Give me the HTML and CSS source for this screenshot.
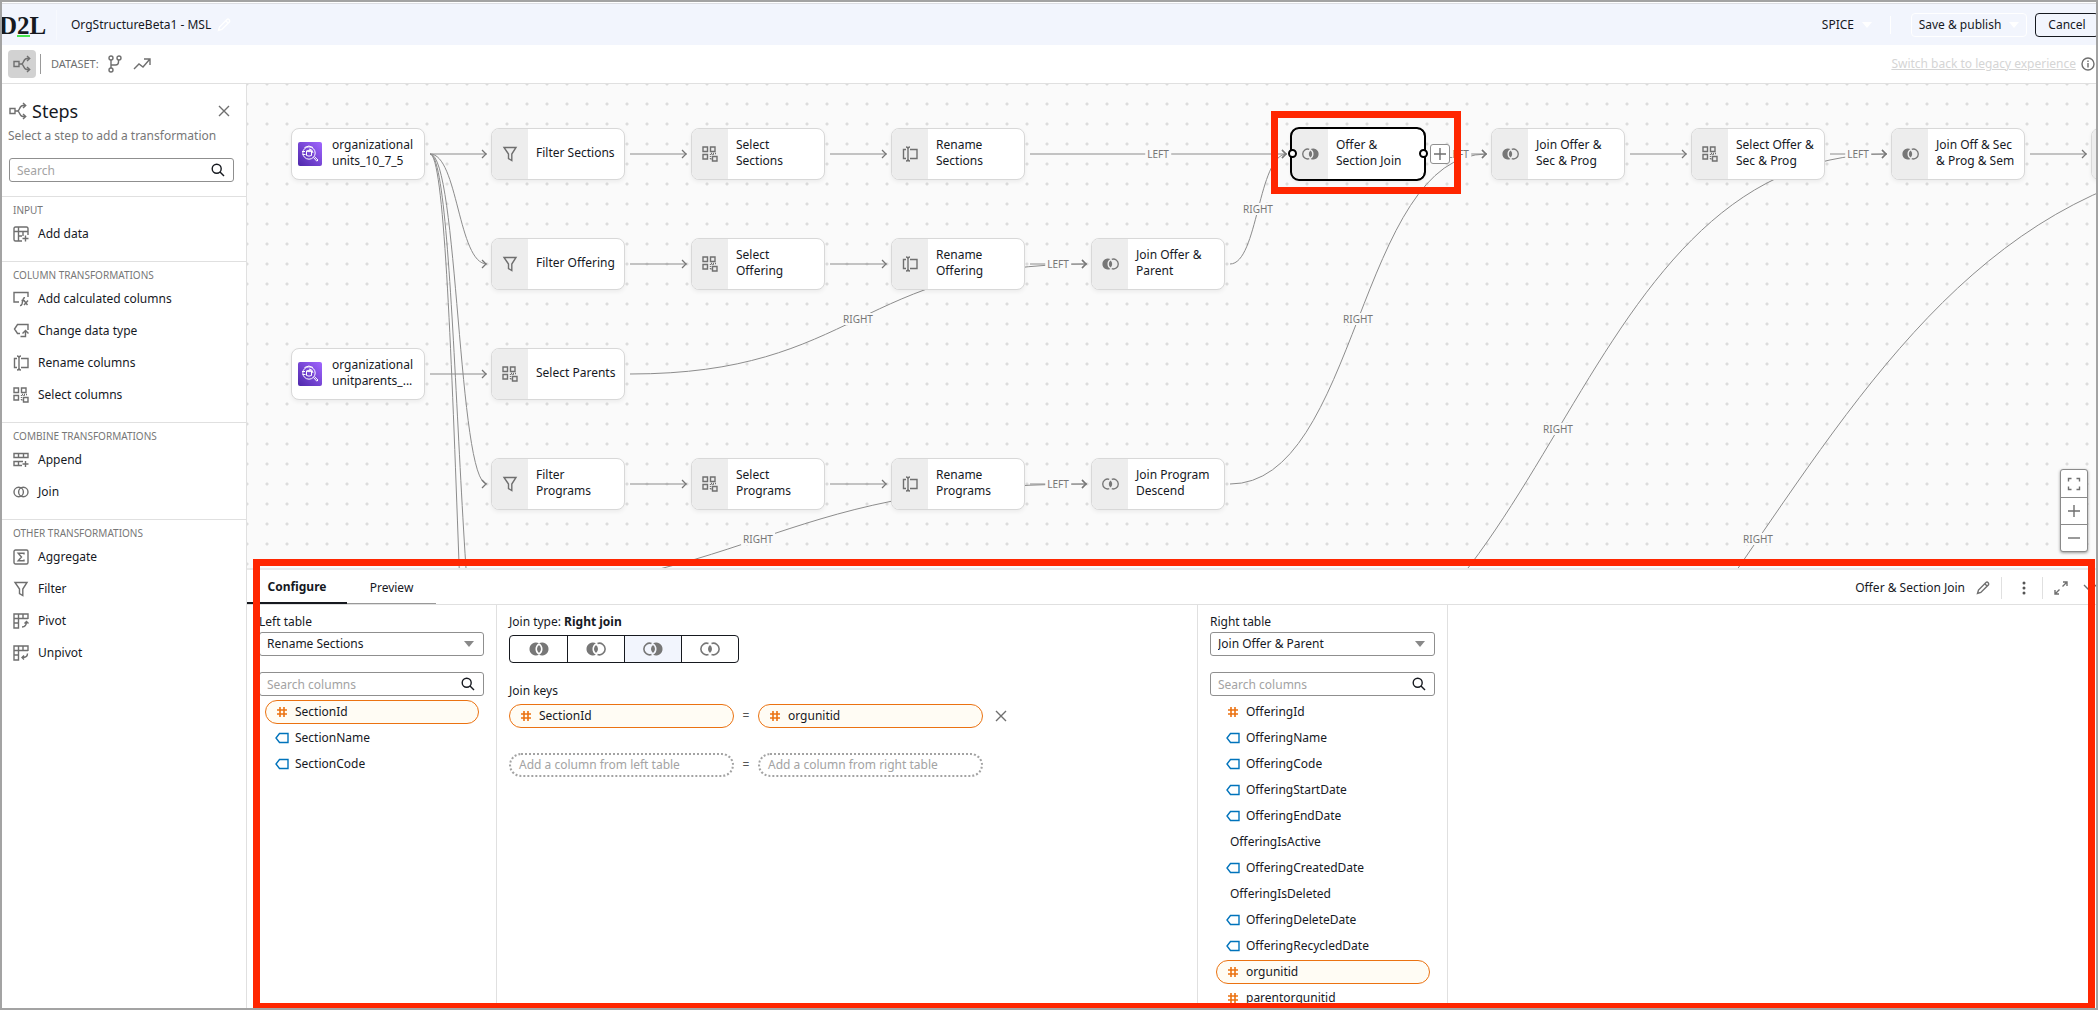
FILE: index.html
```html
<!DOCTYPE html>
<html lang="en">
<head>
<meta charset="utf-8">
<title>OrgStructureBeta1 - MSL</title>
<link rel="stylesheet" href="styles.css">
</head>
<body>
<svg class="sprite" aria-hidden="true">
  <symbol id="i-flow" viewBox="0 0 18 18"><path d="M1 6.500h5v5H1zM6 9h2.500C11 9 10 3.500 14 3.500h2.500M8.500 9C11 9 10 14.500 14 14.500h2.500M14 1l2.700 2.500L14 6M14 12l2.700 2.500L14 17"/></symbol>
  <symbol id="i-branch" viewBox="0 0 16 18"><path d="M4 5v8M4 10h4.500q3 0 3-3V5"/><circle cx="4" cy="3" r="2"/><circle cx="12" cy="3" r="2"/><circle cx="4" cy="15" r="2"/></symbol>
  <symbol id="i-trend" viewBox="0 0 18 18"><path d="M1 14l5-5 4 3 6.500-7.500M11 4h6v6"/></symbol>
  <symbol id="i-close" viewBox="0 0 12 12"><path d="M1 1l10 10M11 1L1 11"/></symbol>
  <symbol id="i-search" viewBox="0 0 14 14"><circle cx="5.700" cy="5.700" r="4.500"/><path d="M9 9l4 4"/></symbol>
  <symbol id="i-pencil" viewBox="0 0 14 14"><path d="M1.500 12.500l1-3.500 7.500-7.500q1-1 2 0t.500 2.300L4.800 11.400zM9 3l2.300 2.300"/></symbol>
  <symbol id="i-adddata" viewBox="0 0 16 16"><path d="M15 9V2.500Q15 1 13.500 1h-11Q1 1 1 2.500v11Q1 15 2.500 15H9M1 5.500h14M5.500 1v14M10 5.500V10M5.500 10H9M12.500 9.500v6M9.500 12.500h6"/></symbol>
  <symbol id="i-calc" viewBox="0 0 16 16"><path d="M15 6V1.500H1v9.500h5"/><path d="M7 14.500q1.500.3 2-1.500l1.200-5q.3-1.500 1.800-1.300M8.500 9.500h3M11 9.500l3.500 4.500M15 9.500l-4 4.500"/></symbol>
  <symbol id="i-type" viewBox="0 0 16 16"><path d="M15 7V1.500H4.500L1.500 6l3 4.500H7M7.500 13.500h5V8.500M9.500 10.500l3-3 3 3"/></symbol>
  <symbol id="i-rename" viewBox="0 0 16 16"><path d="M4 3.500H1.500v9H4M8 3.500h7v9H8M4 1q2 0 2 2v10q0 2-2 2M8 1Q6 1 6 3v10q0 2 2 2"/></symbol>
  <symbol id="i-select" viewBox="0 0 16 16"><path d="M1 1h4.500v4.500H1zM8.500 1H13v4.500H8.500zM1 8.500h4.500V13H1zM10.500 10.500H15V15h-4.500z"/><path class="dash" d="M8.500 8v5M11 8v2M14 7.500h-6M8.500 13h1"/></symbol>
  <symbol id="i-append" viewBox="0 0 16 16"><path d="M1 1.500h14v4H1zM5.500 1.500v4M10.500 1.500v4M10 9.500H1v4h8M5.500 9.500v4M12.500 9v6M9.500 12h6"/></symbol>
  <symbol id="i-join" viewBox="0 0 16 16"><circle cx="5.700" cy="8" r="4.700"/><circle cx="10.300" cy="8" r="4.700"/></symbol>
  <symbol id="i-agg" viewBox="0 0 16 16"><rect x="1" y="1" width="14" height="14" rx="1.500"/><path d="M11 5.500V4.300H5.200L8.500 8l-3.300 3.700H11v-1.200"/></symbol>
  <symbol id="i-filter" viewBox="0 0 16 16"><path d="M2 1.500h12L9.800 8v6.500l-3.300-2V8z"/></symbol>
  <symbol id="i-pivot" viewBox="0 0 16 16"><path d="M15 6V1H1v14h4.500V5.500H15M5.500 1v4.500M10 1v4.500M1 5.500h4.500M1 10h4.500M9 14q4.500 0 4.500-5.500M11.500 10.500l2-2 2 2"/></symbol>
  <symbol id="i-unpivot" viewBox="0 0 16 16"><path d="M15 6V1H1v14h4.500V5.500H15M5.500 1v4.500M10 1v4.500M1 5.500h4.500M1 10h4.500M14.500 8.500q0 4-5 4M11 10.500l-2 2 2 2"/></symbol>
  <symbol id="i-hash" viewBox="0 0 12 12"><path d="M4 1v10M8 1v10M1 4h10M1 8h10"/></symbol>
  <symbol id="i-string" viewBox="0 0 14 12"><path d="M4.500 1.500H13v9H4.500L1 6z"/></symbol>
  <symbol id="i-full" viewBox="0 0 20 14"><path class="fill" d="M9.900 1.200A6.500 6.500 0 1 0 9.900 12.800A6.600 6.600 0 0 1 9.900 1.200zM10.100 1.200A6.500 6.500 0 1 1 10.100 12.800A6.600 6.600 0 0 0 10.100 1.200zM10 3A5 5 0 0 1 10 11A5 5 0 0 1 10 3z"/></symbol>
  <symbol id="i-left" viewBox="0 0 20 14"><path class="fill" d="M9.900 1.200A6.500 6.500 0 1 0 9.900 12.800A6.600 6.600 0 0 1 9.900 1.200zM10 3A5 5 0 0 1 10 11A5 5 0 0 1 10 3z"/><path d="M11.500 1.500A5.800 5.800 0 1 1 11.500 12.500"/></symbol>
  <symbol id="i-right" viewBox="0 0 20 14"><path class="fill" d="M10.100 1.200A6.500 6.500 0 1 1 10.100 12.800A6.600 6.600 0 0 0 10.100 1.200zM10 3A5 5 0 0 1 10 11A5 5 0 0 1 10 3z"/><path d="M8.500 1.500A5.800 5.800 0 1 0 8.500 12.500"/></symbol>
  <symbol id="i-inner" viewBox="0 0 20 14"><path class="fill" d="M10 3A5 5 0 0 1 10 11A5 5 0 0 1 10 3z"/><path d="M8.500 1.500A5.800 5.800 0 1 0 8.500 12.500M11.500 1.500A5.800 5.800 0 1 1 11.500 12.500"/></symbol>
  <symbol id="i-athena" viewBox="0 0 24 24"><rect width="24" height="24" rx="2" fill="url(#violet)"/><g fill="none" stroke="#fff"><circle cx="11" cy="11" r="6.200"/><path d="M15.500 15.500l3.300 3.700 1.200-1.200-3.500-3.300M8.500 9q2.500-1.500 5 0v4.500q-2.500 1.300-5 0zM8.500 9q2.500 1.500 5 0M4 9.500h3M4.500 12.500h3M11 7q3.500 0 4 4M6.500 5.500q4.500-3 8.500 0"/></g></symbol>
  <symbol id="i-fit" viewBox="0 0 14 14"><path d="M1.500 4.500v-3h3M9.500 1.500h3v3M12.500 9.500v3h-3M4.500 12.500h-3v-3"/></symbol>
  <symbol id="i-plus" viewBox="0 0 14 14"><path d="M7 1v12M1 7h12"/></symbol>
  <symbol id="i-minus" viewBox="0 0 14 14"><path d="M1 7h12"/></symbol>
  <symbol id="i-more" viewBox="0 0 4 16"><circle class="fill" cx="2" cy="3" r="1.500"/><circle class="fill" cx="2" cy="8" r="1.500"/><circle class="fill" cx="2" cy="13" r="1.500"/></symbol>
  <symbol id="i-expand" viewBox="0 0 14 14"><path d="M8.500 5.500L13 1M9 1h4v4M5.500 8.500L1 13M1 9v4h4"/></symbol>
  <symbol id="i-chevron" viewBox="0 0 14 8"><path d="M1 1l6 6 6-6"/></symbol>
  <symbol id="i-info" viewBox="0 0 14 14"><circle cx="7" cy="7" r="6"/><path d="M7 6v4.500M7 3.500v1.500"/></symbol>
  <symbol id="i-caret" viewBox="0 0 10 6"><path class="fill" d="M0 0h10L5 6z"/></symbol>
  <defs>
    <linearGradient id="violet" x1="0" y1="1" x2="1" y2="0"><stop offset="0" stop-color="#4d27aa"/><stop offset="1" stop-color="#a166ff"/></linearGradient>
  </defs>
</svg>

<header class="topbar">
  <div class="logo">D<span class="logo-two">2</span>L</div>
  <h1 class="title">OrgStructureBeta1 - MSL</h1>
  <button class="icon-btn pale" aria-label="Edit name"><svg class="ic ic14"><use href="#i-pencil"/></svg></button>
  <div class="top-actions">
    <button class="spice">SPICE <svg class="caret"><use href="#i-caret"/></svg></button>
    <span class="top-rule"></span>
    <button class="btn publish">Save &amp; publish <svg class="caret"><use href="#i-caret"/></svg></button>
    <button class="btn cancel">Cancel</button>
  </div>
</header>

<nav class="toolbar">
  <button class="flow-btn" aria-label="Steps"><svg class="ic ic18"><use href="#i-flow"/></svg></button>
  <span class="tool-rule"></span>
  <span class="dataset">DATASET:</span>
  <button class="icon-btn" aria-label="Lineage"><svg class="ic ic18"><use href="#i-branch"/></svg></button>
  <button class="icon-btn" aria-label="Trend"><svg class="ic ic18"><use href="#i-trend"/></svg></button>
  <a class="legacy" href="#">Switch back to legacy experience</a>
  <button class="icon-btn" aria-label="Information"><svg class="ic ic14"><use href="#i-info"/></svg></button>
</nav>

<div class="workspace">
  <aside class="sidebar">
    <div class="side-head">
      <svg class="ic ic18"><use href="#i-flow"/></svg>
      <h2>Steps</h2>
      <button class="icon-btn" aria-label="Close"><svg class="ic ic12"><use href="#i-close"/></svg></button>
    </div>
    <p class="hint">Select a step to add a transformation</p>
    <div class="search side-search"><input type="text" placeholder="Search" aria-label="Search steps"><svg class="ic ic14"><use href="#i-search"/></svg></div>
    <section class="group"><h3>INPUT</h3>
      <button><svg class="ic ic16"><use href="#i-adddata"/></svg>Add data</button>
    </section>
    <section class="group"><h3>COLUMN TRANSFORMATIONS</h3>
      <button><svg class="ic ic16"><use href="#i-calc"/></svg>Add calculated columns</button>
      <button><svg class="ic ic16"><use href="#i-type"/></svg>Change data type</button>
      <button><svg class="ic ic16"><use href="#i-rename"/></svg>Rename columns</button>
      <button><svg class="ic ic16"><use href="#i-select"/></svg>Select columns</button>
    </section>
    <section class="group"><h3>COMBINE TRANSFORMATIONS</h3>
      <button><svg class="ic ic16"><use href="#i-append"/></svg>Append</button>
      <button><svg class="ic ic16"><use href="#i-join"/></svg>Join</button>
    </section>
    <section class="group"><h3>OTHER TRANSFORMATIONS</h3>
      <button><svg class="ic ic16"><use href="#i-agg"/></svg>Aggregate</button>
      <button><svg class="ic ic16"><use href="#i-filter"/></svg>Filter</button>
      <button><svg class="ic ic16"><use href="#i-pivot"/></svg>Pivot</button>
      <button><svg class="ic ic16"><use href="#i-unpivot"/></svg>Unpivot</button>
    </section>
  </aside>

  <main class="stage">
    <div class="canvas">
      <svg class="edges" aria-hidden="true">
        <defs><marker id="tip" markerWidth="8" markerHeight="10" refX="6" refY="5" orient="0" markerUnits="userSpaceOnUse"><path d="M1 1l4 4-4 4"/></marker></defs>
        <g marker-end="url(#tip)">
          <path d="M183 70H240"/><path d="M383 70H440"/><path d="M583 70H640"/><path d="M783 70H1040"/><path d="M1183 70H1240"/><path d="M1383 70H1440"/><path d="M1583 70H1640"/><path d="M1783 70H1840"/>
          <path d="M383 180H440"/><path d="M583 180H640"/><path d="M783 180H840"/>
          <path d="M183 290H240"/>
          <path d="M383 400H440"/><path d="M583 400H640"/><path d="M783 400H840"/>
          <path d="M183 70C211 70 211 180 240 180"/><path d="M183 70C211 70 211 400 240 400"/><path d="M183 70C211 70 211 620 240 620"/><path d="M183 70C211 70 211 840 240 840"/>
          <path d="M383 290C611 290 611 180 840 180"/>
          <path d="M983 180C1011 180 1011 70 1040 70"/>
          <path d="M983 400C1111 400 1111 70 1240 70"/>
          <path d="M983 620C1311 620 1311 70 1640 70"/>
          <path d="M983 840C1511 840 1511 70 2040 70"/>
          <path d="M183 510C511 510 511 400 840 400"/>
        </g>
      </svg>
      <span class="edge-label m911 h70">LEFT</span><span class="edge-label m1211 h70">LEFT</span><span class="edge-label m1611 h70">LEFT</span>
      <span class="edge-label m811 h180">LEFT</span><span class="edge-label m811 h400">LEFT</span>
      <span class="edge-label m1011 h125">RIGHT</span><span class="edge-label m611 h235">RIGHT</span><span class="edge-label m1111 h235">RIGHT</span>
      <span class="edge-label m1311 h345">RIGHT</span><span class="edge-label m1511 h455">RIGHT</span><span class="edge-label m511 h455">RIGHT</span>

      <button class="node source c0 r0"><span class="kind"><svg class="ic24"><use href="#i-athena"/></svg></span><span class="name">organizational units_10_7_5</span></button>
      <button class="node c1 r0"><span class="kind"><svg class="ic ic16"><use href="#i-filter"/></svg></span><span class="name">Filter Sections</span></button>
      <button class="node c2 r0"><span class="kind"><svg class="ic ic16"><use href="#i-select"/></svg></span><span class="name">Select<br>Sections</span></button>
      <button class="node c3 r0"><span class="kind"><svg class="ic ic16"><use href="#i-rename"/></svg></span><span class="name">Rename<br>Sections</span></button>
      <button class="node selected c5 r0"><span class="kind"><svg class="ic venn-s"><use href="#i-right"/></svg></span><span class="name">Offer &amp;<br>Section Join</span></button>
      <span class="handle in"></span><span class="handle out"></span>
      <button class="add-step" aria-label="Add step"><svg class="ic ic14"><use href="#i-plus"/></svg></button>
      <button class="node c6 r0"><span class="kind"><svg class="ic venn-s"><use href="#i-left"/></svg></span><span class="name">Join Offer &amp;<br>Sec &amp; Prog</span></button>
      <button class="node c7 r0"><span class="kind"><svg class="ic ic16"><use href="#i-select"/></svg></span><span class="name">Select Offer &amp;<br>Sec &amp; Prog</span></button>
      <button class="node c8 r0"><span class="kind"><svg class="ic venn-s"><use href="#i-left"/></svg></span><span class="name">Join Off &amp; Sec<br>&amp; Prog &amp; Sem</span></button>
      <button class="node c9 r0" aria-label="Next step"><span class="kind"></span></button>

      <button class="node c1 r1"><span class="kind"><svg class="ic ic16"><use href="#i-filter"/></svg></span><span class="name">Filter Offering</span></button>
      <button class="node c2 r1"><span class="kind"><svg class="ic ic16"><use href="#i-select"/></svg></span><span class="name">Select<br>Offering</span></button>
      <button class="node c3 r1"><span class="kind"><svg class="ic ic16"><use href="#i-rename"/></svg></span><span class="name">Rename<br>Offering</span></button>
      <button class="node c4 r1"><span class="kind"><svg class="ic venn-s"><use href="#i-left"/></svg></span><span class="name">Join Offer &amp;<br>Parent</span></button>

      <button class="node source c0 r2"><span class="kind"><svg class="ic24"><use href="#i-athena"/></svg></span><span class="name">organizational unitparents_...</span></button>
      <button class="node c1 r2"><span class="kind"><svg class="ic ic16"><use href="#i-select"/></svg></span><span class="name">Select Parents</span></button>

      <button class="node c1 r3"><span class="kind"><svg class="ic ic16"><use href="#i-filter"/></svg></span><span class="name">Filter<br>Programs</span></button>
      <button class="node c2 r3"><span class="kind"><svg class="ic ic16"><use href="#i-select"/></svg></span><span class="name">Select<br>Programs</span></button>
      <button class="node c3 r3"><span class="kind"><svg class="ic ic16"><use href="#i-rename"/></svg></span><span class="name">Rename<br>Programs</span></button>
      <button class="node c4 r3"><span class="kind"><svg class="ic venn-s"><use href="#i-inner"/></svg></span><span class="name">Join Program<br>Descend</span></button>

      <div class="callout callout-node"></div>
      <div class="zoom-controls">
        <button aria-label="Fit"><svg class="ic ic14"><use href="#i-fit"/></svg></button>
        <button aria-label="Zoom in"><svg class="ic ic14"><use href="#i-plus"/></svg></button>
        <button aria-label="Zoom out"><svg class="ic ic14"><use href="#i-minus"/></svg></button>
      </div>
    </div>

    <section class="panel">
      <div class="panel-head">
        <button class="tab active">Configure</button>
        <button class="tab">Preview</button>
        <div class="panel-tools">
          <span class="step-name">Offer &amp; Section Join</span>
          <button class="icon-btn" aria-label="Rename step"><svg class="ic ic14"><use href="#i-pencil"/></svg></button>
          <button class="icon-btn ruled more-btn" aria-label="More"><svg class="ic more"><use href="#i-more"/></svg></button>
          <button class="icon-btn ruled" aria-label="Expand"><svg class="ic ic14"><use href="#i-expand"/></svg></button>
          <button class="icon-btn collapse" aria-label="Collapse"><svg class="ic chev"><use href="#i-chevron"/></svg></button>
        </div>
      </div>
      <div class="panel-body">
        <div class="table-col">
          <label for="left-table">Left table</label>
          <div class="picker"><select id="left-table"><option>Rename Sections</option></select><svg class="caret"><use href="#i-caret"/></svg></div>
          <div class="search"><input type="text" placeholder="Search columns" aria-label="Search left columns"><svg class="ic ic14"><use href="#i-search"/></svg></div>
          <ul class="columns">
            <li class="chosen"><svg class="ic hash"><use href="#i-hash"/></svg>SectionId</li>
            <li><svg class="ic string"><use href="#i-string"/></svg>SectionName</li>
            <li><svg class="ic string"><use href="#i-string"/></svg>SectionCode</li>
          </ul>
        </div>
        <div class="join-col">
          <div class="join-title">Join type: <b>Right join</b></div>
          <div class="join-types">
            <button aria-label="Full join"><svg class="ic venn"><use href="#i-full"/></svg></button>
            <button aria-label="Left join"><svg class="ic venn"><use href="#i-left"/></svg></button>
            <button class="on" aria-label="Right join"><svg class="ic venn"><use href="#i-right"/></svg></button>
            <button aria-label="Inner join"><svg class="ic venn"><use href="#i-inner"/></svg></button>
          </div>
          <div class="join-title keys-title">Join keys</div>
          <div class="key-row">
            <div class="key"><svg class="ic hash"><use href="#i-hash"/></svg>SectionId</div><span class="eq">=</span><div class="key"><svg class="ic hash"><use href="#i-hash"/></svg>orgunitid</div>
            <button class="icon-btn" aria-label="Remove key"><svg class="ic ic12"><use href="#i-close"/></svg></button>
          </div>
          <div class="key-row">
            <div class="key empty">Add a column from left table</div><span class="eq">=</span><div class="key empty">Add a column from right table</div>
          </div>
        </div>
        <div class="table-col">
          <label for="right-table">Right table</label>
          <div class="picker"><select id="right-table"><option>Join Offer &amp; Parent</option></select><svg class="caret"><use href="#i-caret"/></svg></div>
          <div class="search"><input type="text" placeholder="Search columns" aria-label="Search right columns"><svg class="ic ic14"><use href="#i-search"/></svg></div>
          <ul class="columns">
            <li><svg class="ic hash"><use href="#i-hash"/></svg>OfferingId</li>
            <li><svg class="ic string"><use href="#i-string"/></svg>OfferingName</li>
            <li><svg class="ic string"><use href="#i-string"/></svg>OfferingCode</li>
            <li><svg class="ic string"><use href="#i-string"/></svg>OfferingStartDate</li>
            <li><svg class="ic string"><use href="#i-string"/></svg>OfferingEndDate</li>
            <li class="plain">OfferingIsActive</li>
            <li><svg class="ic string"><use href="#i-string"/></svg>OfferingCreatedDate</li>
            <li class="plain">OfferingIsDeleted</li>
            <li><svg class="ic string"><use href="#i-string"/></svg>OfferingDeleteDate</li>
            <li><svg class="ic string"><use href="#i-string"/></svg>OfferingRecycledDate</li>
            <li class="chosen"><svg class="ic hash"><use href="#i-hash"/></svg>orgunitid</li>
            <li><svg class="ic hash"><use href="#i-hash"/></svg>parentorgunitid</li>
          </ul>
        </div>
      </div>
      <div class="callout callout-panel"></div>
    </section>
  </main>
</div>
</body>
</html>
```
FILE: styles.css
```css
* { box-sizing: border-box; }
body {
  margin: 0;
  padding: 3px 2px 0;
  height: 100vh;
  display: flex;
  flex-direction: column;
  overflow: hidden;
  font: 12px/16px "Noto Sans", "Open Sans", sans-serif;
  color: #16191f;
  background: #fff;
}
body::after {
  content: "";
  position: fixed;
  inset: 0;
  border: 2px solid #a3a3a3;
  pointer-events: none;
  z-index: 10;
}
button, input, select { font: inherit; color: inherit; }
button { padding: 0; border: 0; background: none; text-align: left; white-space: nowrap; }
h1, h2, h3, p, ul { margin: 0; padding: 0; font-weight: 400; }

.sprite { position: absolute; width: 0; height: 0; }
.ic { fill: none; stroke: #6f6f6f; stroke-width: 1.4; flex: none; display: block; }
.fill { fill: currentColor; stroke: none; }
.dash { stroke-dasharray: 1 1; }
.ic12 { width: 12px; height: 12px; }
.ic14 { width: 14px; height: 14px; }
.ic16 { width: 16px; height: 16px; }
.ic18 { width: 18px; height: 18px; }
.ic24 { width: 24px; height: 24px; display: block; }
.hash { width: 12px; height: 12px; stroke: #eb7211; stroke-width: 1.6; }
.string { width: 14px; height: 12px; stroke: #0073bb; }
.venn, .venn-s { color: #777; stroke: #777; stroke-width: 1.6; }
.venn { width: 20px; height: 14px; }
.venn-s { width: 17px; height: 12px; }
.more { width: 4px; height: 16px; color: #555; }
.chev { width: 14px; height: 8px; }
.caret { width: 10px; height: 6px; flex: none; }
.icon-btn { flex: none; display: block; }

/* top bar */
.topbar {
  flex: none;
  display: flex;
  align-items: center;
  height: 42px;
  border-top: 1px solid #dcdde2;
  background: #f2f5fd;
}
.logo {
  width: 58px;
  margin-left: -3px;
  padding-top: 2px;
  border-right: 1px solid #f7f9fe;
  font: 700 25px/28px "Liberation Serif", serif;
  color: #16191f;
}
.logo-two { border-bottom: 2px solid #46e54e; display: inline-block; line-height: 18px; }
.title { margin: 0 6px 0 14px; font-size: 12px; }
.pale .ic { stroke: #fff; }
.top-actions { margin-left: auto; margin-right: -3px; display: flex; align-items: center; color: #16191f; }
.top-actions .caret { color: #fff; }
.spice { display: flex; align-items: center; gap: 8px; }
.top-rule { width: 1px; height: 18px; margin: 0 20px 0 18px; background: #fff; }
.btn { display: flex; align-items: center; gap: 8px; height: 24px; border-radius: 4px; }
.publish { width: 116px; justify-content: center; border: 1px solid #fff; }
.cancel { width: 64px; margin-left: 8px; justify-content: center; border: 1px solid #16191f; }

/* tool bar */
.toolbar {
  flex: none;
  display: flex;
  align-items: center;
  height: 39px;
  padding-left: 6px;
  border-bottom: 1px solid #e0e0e0;
}
.flow-btn { width: 28px; height: 28px; padding: 5px; border-radius: 4px; background: #d2d2d2; }
.tool-rule { width: 1px; height: 20px; margin: 0 10px 0 4px; background: #999; }
.dataset { margin-right: 7px; font-size: 11px; color: #6f6f6f; }
.toolbar .icon-btn { margin-right: 9px; }
.legacy { margin-left: auto; margin-right: 5px; color: #d5d5d5; text-decoration: underline; }
.toolbar .icon-btn:last-child { margin-right: 1px; }

/* work area */
.workspace { flex: 1; min-height: 0; display: grid; grid-template-columns: 245px minmax(0, 1fr); }
.sidebar { border-right: 1px solid #e0e0e0; }
.side-head { display: flex; align-items: center; gap: 5px; padding: 15px 16px 0 7px; }
.side-head h2 { flex: 1; font-size: 18px; line-height: 24px; }
.hint { padding: 5px 6px 0; color: #777; }
.search, .picker { position: relative; height: 24px; }
.search input, .picker select {
  display: block;
  width: 100%;
  height: 24px;
  padding: 0 30px 0 7px;
  border: 1px solid #8f8f8f;
  border-radius: 3px;
  background: #fff;
  appearance: none;
}
.search input::placeholder { color: #a3a3a3; opacity: 1; }
.search .ic { position: absolute; right: 9px; top: 5px; stroke: #16191f; }
.picker .caret { position: absolute; right: 10px; top: 9px; color: #888; }
.side-search { margin: 14px 12px 14px 7px; }
.group { padding: 5px 11px 11px; border-top: 1px solid #e0e0e0; }
.group h3 { font-size: 10px; line-height: 16px; color: #777; }
.group button { display: flex; align-items: center; gap: 9px; width: 100%; height: 32px; }

.stage { display: grid; grid-template-rows: minmax(0, 242fr) minmax(0, 221fr); min-height: 0; }
.canvas {
  position: relative;
  overflow: hidden;
  background: radial-gradient(circle, #dcdcdc 0 1px, transparent 2px) 10px 10px / 20px 20px #fafafa;
}
.edges { position: absolute; width: 100%; height: 100%; }
.edges path { fill: none; stroke: #8c8c8c; }
.edges marker path { stroke: #777; stroke-width: 1.3; }
.edge-label { position: absolute; transform: translate(-50%, -50%); padding: 0 2px; background: #fafafa; font-size: 10px; line-height: 12px; color: #777; }
.m511 { left: 511px; } .m611 { left: 611px; } .m811 { left: 811px; } .m911 { left: 911px; } .m1011 { left: 1011px; }
.m1111 { left: 1111px; } .m1211 { left: 1211px; } .m1311 { left: 1311px; } .m1511 { left: 1511px; } .m1611 { left: 1611px; }
.h70 { top: 70px; } .h125 { top: 125px; } .h180 { top: 180px; } .h235 { top: 235px; } .h345 { top: 345px; } .h400 { top: 400px; } .h455 { top: 455px; }

.node {
  position: absolute;
  display: flex;
  width: 134px;
  height: 52px;
  border: 1px solid #d8d8d8;
  border-radius: 8px;
  background: #fff;
  overflow: hidden;
  box-shadow: 0 2px 4px rgba(0, 0, 0, .06);
}
.kind { flex: none; width: 36px; display: flex; align-items: center; justify-content: center; background: #ededed; }
.source .kind { background: none; }
.name { align-self: center; padding: 0 0 2px 8px; white-space: normal; }
.source .name { padding-left: 4px; }
.selected { outline: 2px solid #000; outline-offset: -1px; border-color: #000; }
.c0 { left: 44px; } .c1 { left: 244px; } .c2 { left: 444px; } .c3 { left: 644px; } .c4 { left: 844px; }
.c5 { left: 1044px; } .c6 { left: 1244px; } .c7 { left: 1444px; } .c8 { left: 1644px; } .c9 { left: 1844px; }
.r0 { top: 44px; } .r1 { top: 154px; } .r2 { top: 264px; } .r3 { top: 374px; }
.handle { position: absolute; top: 65px; width: 9px; height: 9px; border: 2px solid #000; border-radius: 50%; background: #fff; }
.in { left: 1041px; }
.out { left: 1172px; }
.add-step { position: absolute; left: 1183px; top: 60px; width: 20px; height: 20px; padding: 2px; border: 1px solid #8f8f8f; border-radius: 3px; background: #fff; }
.zoom-controls {
  position: absolute;
  right: 8px;
  bottom: 16px;
  width: 28px;
  border: 1px solid #8a8a8a;
  border-radius: 3px;
  background: #fff;
  box-shadow: 0 1px 3px rgba(0, 0, 0, .4);
}
.zoom-controls button { display: flex; align-items: center; justify-content: center; width: 100%; height: 27px; }
.zoom-controls button + button { border-top: 1px solid #8a8a8a; }

/* callouts drawn over the page */
.callout { position: absolute; border: 7px solid #ff2600; pointer-events: none; }
.callout-node { left: 1024px; top: 27px; width: 190px; height: 83px; }
.callout-panel { inset: -11px 1px 0 6px; }

/* configuration panel */
.panel { position: relative; display: flex; flex-direction: column; min-height: 0; border-top: 2px solid #e9e9e9; background: #fff; }
.panel-head { flex: none; display: flex; height: 35px; border-bottom: 1px solid #e0e0e0; overflow: hidden; }
.tab { width: 89px; padding-top: 2px; border-bottom: 1px solid #999; text-align: center; }
.tab.active { width: 100px; border-bottom: 2px solid #16191f; font-weight: 700; }
.panel-tools { margin-left: auto; margin-right: -1px; padding-top: 1px; display: flex; align-items: center; gap: 11px; }
.ruled { display: flex; align-items: center; height: 22px; padding-left: 11px; border-left: 1px solid #e0e0e0; }
.more-btn { padding: 0 5px 0 20px; }
.collapse { margin-left: 4px; }
.panel-body { flex: 1; min-height: 0; display: flex; overflow: hidden; }
.table-col { flex: none; width: 250px; padding: 9px 12px 0; border-right: 1px solid #e0e0e0; }
.table-col label { display: block; line-height: 16px; }
.picker { margin-top: 2px; margin-bottom: 16px; }
.columns { list-style: none; padding: 4px 5px 0 6px; }
.columns li { display: flex; align-items: center; gap: 6px; height: 24px; margin-bottom: 2px; padding-left: 9px; border: 1px solid transparent; border-radius: 12px; }
.columns .hash, .key .hash { margin: 0 1px; }
.columns .plain { padding-left: 13px; }
.columns .chosen, .key { border: 1px solid #eb7211; background: #fffcf4; }

.join-col { flex: 0 0 701px; padding: 9px 12px 0; border-right: 1px solid #e0e0e0; }
.join-types { display: inline-flex; height: 28px; margin: 5px 0 20px; border: 1px solid #16191f; border-radius: 4px; overflow: hidden; vertical-align: top; }
.join-types button { display: flex; align-items: center; justify-content: center; width: 57px; }
.join-types button + button { border-left: 1px solid #16191f; }
.join-types .on { background: #f2f5fd; }
.keys-title { margin-bottom: 5px; }
.key-row { display: flex; align-items: center; margin-bottom: 25px; }
.key-row .icon-btn { margin-left: 12px; }
.key { display: flex; align-items: center; gap: 6px; width: 225px; height: 24px; padding-left: 9px; border-radius: 12px; }
.key.empty { border: 2px dotted #a3a3a3; background: none; color: #a3a3a3; padding-left: 8px; }
.eq { width: 24px; text-align: center; color: #555; }
```
